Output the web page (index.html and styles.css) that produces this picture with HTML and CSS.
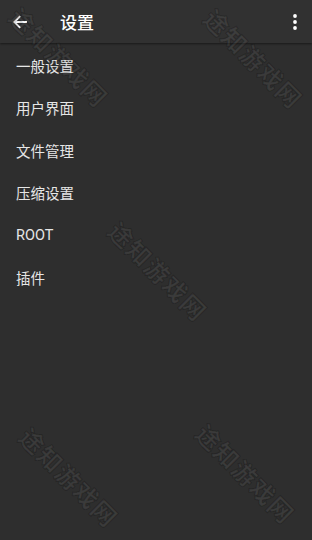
FILE: index.html
```html
<!DOCTYPE html>
<html lang="zh">
<head>
<meta charset="utf-8">
<title>设置</title>
<link rel="stylesheet" href="styles.css">
</head>
<body>
<div class="screen">
  <header class="toolbar">
    <button class="icon-btn back" aria-label="返回">
      <svg width="16" height="16" viewBox="0 0 16 16"><path d="M15 8H2.5M8.2 2.2L2.4 8l5.8 5.8" fill="none" stroke="#fff" stroke-width="1.9"/></svg>
    </button>
    <h1 class="title">设置</h1>
    <button class="icon-btn more" aria-label="更多">
      <svg width="6" height="16" viewBox="0 0 6 16"><circle cx="3" cy="2" r="1.9" fill="#fff"/><circle cx="3" cy="8" r="1.9" fill="#fff"/><circle cx="3" cy="14" r="1.9" fill="#fff"/></svg>
    </button>
  </header>
  <ul class="list">
    <li>一般设置</li>
    <li>用户界面</li>
    <li>文件管理</li>
    <li>压缩设置</li>
    <li>ROOT</li>
    <li>插件</li>
  </ul>
  <div class="watermarks" aria-hidden="true">
    <span class="wm wm-l wm1">途知游戏网</span>
    <span class="wm wm-r wm2">途知游戏网</span>
    <span class="wm wm-l wm3">途知游戏网</span>
    <span class="wm wm-l wm4">途知游戏网</span>
    <span class="wm wm-r wm5">途知游戏网</span>
  </div>
</div>
</body>
</html>
```
FILE: styles.css
```css
* { box-sizing: border-box; }
html, body {
  margin: 0;
  padding: 0;
  background: #2e2e2e;
}
body {
  font-family: Roboto, "Noto Sans CJK SC", "Noto Sans", sans-serif;
  color: #e8e8e8;
}
.screen {
  position: relative;
  width: 312px;
  height: 540px;
  overflow: hidden;
  background: #2e2e2e;
}
.toolbar {
  height: 43px;
  display: flex;
  align-items: center;
  background: #313131;
  box-shadow: 0 1px 2px rgba(0, 0, 0, 0.45);
  position: relative;
  z-index: 1;
}
.icon-btn {
  background: none;
  border: 0;
  padding: 0;
  display: flex;
  align-items: center;
  justify-content: center;
}
.back {
  width: 16px;
  height: 16px;
  margin-left: 12px;
  margin-top: 1px;
}
.title {
  margin: 0 0 0 32px;
  font-size: 17px;
  font-weight: 500;
  color: #ffffff;
  font-family: "Noto Sans CJK SC", sans-serif;
  line-height: 1;
  flex: 1;
}
.more {
  width: 6px;
  height: 16px;
  margin-right: 14px;
  margin-top: 1px;
}
.list {
  list-style: none;
  margin: 0;
  padding: 1px 0 0 0;
}
.list li {
  height: 42.5px;
  display: flex;
  align-items: center;
  padding-left: 16px;
  font-size: 14.5px;
  font-family: Roboto, "Noto Sans CJK SC", sans-serif;
  color: #e6e6e6;
}
.watermarks {
  position: absolute;
  inset: 0;
  pointer-events: none;
  z-index: 2;
}
.wm {
  position: absolute;
  width: 128px;
  height: 24px;
  white-space: nowrap;
  font-family: "Noto Sans CJK SC", sans-serif;
  font-weight: 700;
  font-size: 24px;
  letter-spacing: 1.5px;
  line-height: 24px;
  color: rgba(255, 255, 255, 0.065);
  -webkit-text-stroke: 1.5px rgba(0, 0, 0, 0.16);
  paint-order: stroke fill;
  transform: rotate(45deg);
}
.wm-l { transform-origin: 0 50%; }
.wm-r { transform-origin: 100% 50%; }
.wm1 { left: 14px; top: 0; }
.wm2 { left: 171px; top: 92px; }
.wm3 { left: 113px; top: 214px; }
.wm4 { left: 24px; top: 420px; }
.wm5 { left: 163px; top: 507px; }
```
